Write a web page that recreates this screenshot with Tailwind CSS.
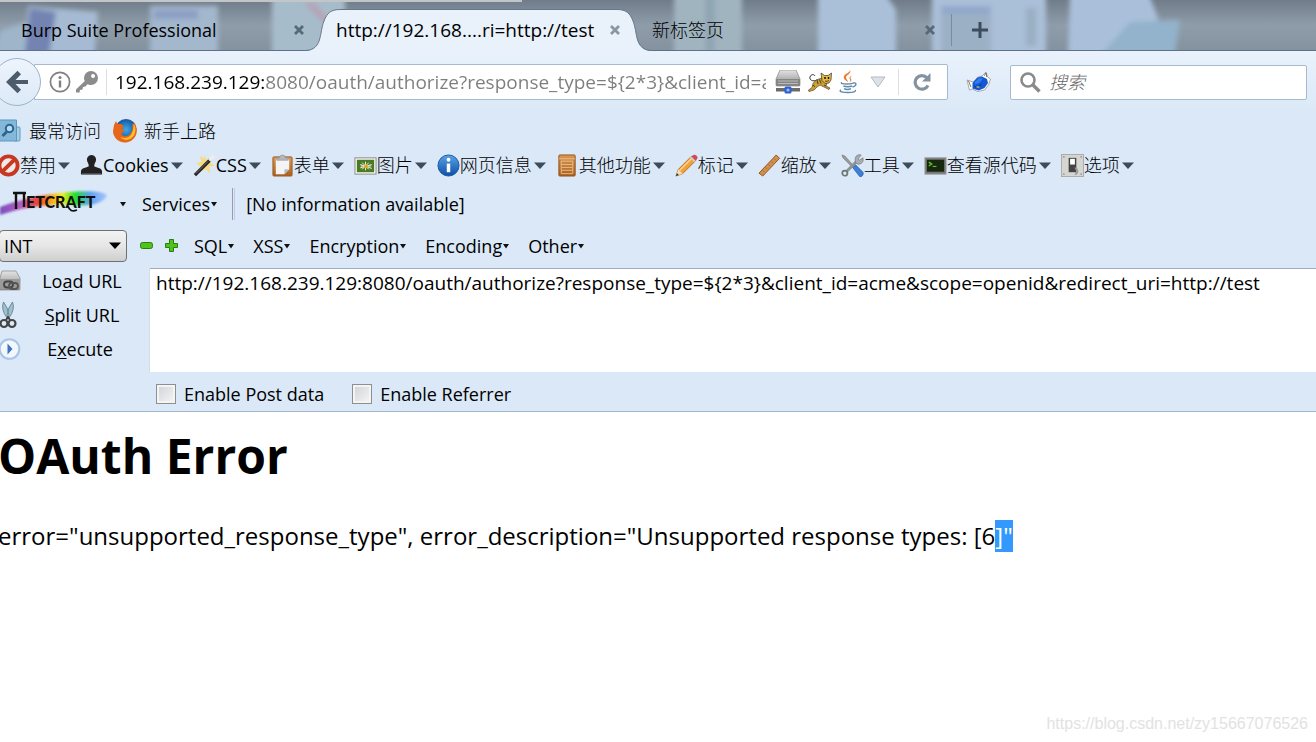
<!DOCTYPE html>
<html lang="zh-CN">
<head>
<meta charset="utf-8">
<title>OAuth Error</title>
<script src="https://cdn.jsdelivr.net/npm/@tailwindcss/browser@4"></script>
</head>
<body class="min-h-screen bg-white text-black text-lg leading-6 overflow-hidden relative font-['Open_Sans','Noto_Sans_CJK_SC',sans-serif]">

<svg class="absolute size-0" aria-hidden="true">
  <defs>
    <linearGradient id="gBlue" x1="0" y1="0" x2="0" y2="1"><stop offset="0" stop-color="#5ba3e6"/><stop offset="1" stop-color="#0b4fa8"/></linearGradient>
    <linearGradient id="gGrey" x1="0" y1="0" x2="0" y2="1"><stop offset="0" stop-color="#e4e4e4"/><stop offset="1" stop-color="#8a8a8a"/></linearGradient>
    <linearGradient id="gWood" x1="0" y1="0" x2="0" y2="1"><stop offset="0" stop-color="#d99a55"/><stop offset="1" stop-color="#a85f20"/></linearGradient>
    <linearGradient id="gRain" x1="0" y1="0" x2="1" y2="0"><stop offset="0" stop-color="#7a4fc0"/><stop offset=".2" stop-color="#b65fc0"/><stop offset=".36" stop-color="#f0402a"/><stop offset=".48" stop-color="#f7a81c"/><stop offset=".58" stop-color="#f4ee20"/><stop offset=".7" stop-color="#1fe02a"/><stop offset=".84" stop-color="#5fa0f0"/><stop offset="1" stop-color="#a9c8fb"/></linearGradient>
    <radialGradient id="gFox"><stop offset="0" stop-color="#3fa9e8"/><stop offset="1" stop-color="#14559f"/></radialGradient>
    <filter id="soft" x="-10%" y="-30%" width="120%" height="160%"><feGaussianBlur stdDeviation="2.500"/></filter>
    <filter id="soft1" x="-10%" y="-30%" width="120%" height="160%"><feGaussianBlur stdDeviation="1.200"/></filter>
    <symbol id="x" viewBox="0 0 12 12"><path d="M2 2l8 8M10 2l-8 8" stroke="currentColor" stroke-width="2.800" fill="none"/></symbol>
    <symbol id="down" viewBox="0 0 12 7"><path d="M0 .5h12L6 7z" fill="#3c4c5a"/></symbol>
    <symbol id="tiny" viewBox="0 0 8 6"><path d="M1 1h6L4 5.500z" fill="#111"/></symbol>
  </defs>
</svg>

<header class="bg-[#dae8f7] border-b border-[#a3b6c9]">

  <!-- Tab strip -->
  <div class="relative h-[51px] flex bg-[#8796a5] overflow-hidden" role="tablist">
    <svg class="absolute inset-0 w-full h-full" viewBox="0 0 1316 51" preserveAspectRatio="none" aria-hidden="true">
      <defs><linearGradient id="sky" x1="0" y1="0" x2="0" y2="1"><stop offset="0" stop-color="#707c89"/><stop offset=".5" stop-color="#8f9dab"/><stop offset="1" stop-color="#84929f"/></linearGradient></defs>
      <rect width="1316" height="51" fill="url(#sky)"/>
      <g filter="url(#soft)">
        <path d="M0 30L28 22 24 60H-10z" fill="#9fb5c9"/>
        <path d="M28 6L98 12 94 60H24z" fill="#a6bbd3"/>
        <path d="M30 8L56 12 48 60H24z" fill="#7383b2"/>
        <rect x="150" y="6" width="68" height="54" fill="#a3b7cd"/>
        <rect x="154" y="10" width="44" height="9" fill="#8c9fc4"/>
        <path d="M272-4H345V60H272z" fill="#a7bccb"/>
        <path d="M304 3l10-1 14 16-4 6z" fill="#b4a4b6"/>
        <rect x="674" y="-8" width="68" height="68" fill="#a0b4c0"/>
        <rect x="705" y="-8" width="10" height="68" fill="#90a5b2"/>
        <path d="M818-8H884L896 10V60H818z" fill="#aac0d9"/>
        <rect x="932" y="-8" width="114" height="68" fill="#aabfd8"/>
        <rect x="941" y="6" width="50" height="54" fill="#9bb0c4"/>
        <rect x="941" y="6" width="50" height="8" fill="#91a8cc"/>
        <rect x="1026" y="8" width="10" height="38" fill="#99afc2"/>
        <path d="M1070-8H1148L1158 18 1156 60H1068z" fill="#aac0da"/>
        <path d="M1130 22L1180 20 1174 60H1096z" fill="#93b2cb"/>
      </g>
      <rect width="522" height="2" fill="#c3c6c9"/>
      <rect y="50" width="1316" height="1" fill="#5e7188"/>
    </svg>
    <div class="relative w-[305px] pl-[21px] flex items-center pt-[10px] pb-[1px]" role="tab">
      <span class="flex-1">Burp Suite Professional</span>
      <button aria-label="关闭标签页" class="text-[#57687a]"><svg class="size-3"><use href="#x"/></svg></button>
    </div>
    <div class="relative w-[347px] px-[31px] flex items-center pt-[10px] pb-[1px]" role="tab" aria-selected="true">
      <div class="absolute inset-x-0 top-[9px] bottom-0 flex">
        <svg class="w-[35px] h-[42px]" viewBox="0 0 35 42"><path d="M0 42C18 41 14 24 19 12 22 4 26 .5 35 .5V42z" fill="#e9f1fb"/><path d="M0 41.500C18 41 14 24 19 12 22 4 26 .5 35 .5" fill="none" stroke="#66788c"/></svg>
        <div class="flex-1 bg-[#e9f1fb] border-t border-[#66788c]"></div>
        <svg class="w-[35px] h-[42px]" viewBox="0 0 35 42"><path d="M35 42C17 41 21 24 16 12 13 4 9 .5 0 .5V42z" fill="#e9f1fb"/><path d="M35 41.500C17 41 21 24 16 12 13 4 9 .5 0 .5" fill="none" stroke="#66788c"/></svg>
      </div>
      <span class="relative flex-1 text-[19px]">http://192.168....ri=http://test</span>
      <button aria-label="关闭标签页" class="relative text-[#8997a5]"><svg class="size-3"><use href="#x"/></svg></button>
    </div>
    <div class="relative w-[284px] flex items-center pt-[10px] pb-[1px] font-light" role="tab">
      <span class="flex-1">新标签页</span>
      <button aria-label="关闭标签页" class="text-[#57687a]"><svg class="size-3"><use href="#x"/></svg></button>
    </div>
    <div class="relative ml-[15px] mt-[14px] w-px h-8 bg-[#7a8b9c]"></div>
    <button aria-label="新建标签页" class="relative ml-5 pt-2"><svg class="size-4" viewBox="0 0 16 16"><path d="M8 0v16M0 8h16" stroke="#3b4c5d" stroke-width="3"/></svg></button>
  </div>

  <!-- Navigation bar -->
  <div class="h-16 flex items-center bg-linear-to-b from-[#e9f2fc] to-[#dae8f7] pr-[9px] pb-[2px] overflow-hidden">
    <button aria-label="后退" class="relative z-10 -ml-[7px] shrink-0 size-12 rounded-full border border-[#9fb3c8] bg-linear-to-b from-[#edf4fc] to-[#dce9f7] flex items-center justify-center">
      <svg class="w-[22px] h-6" viewBox="0 0 22 24"><path d="M22 10H9.500L15 4.200 11.500.8 0 12l11.500 11.200L15 19.800 9.500 14H22z" fill="#4d5c6a"/></svg>
    </button>
    <div class="-ml-[7px] flex-1 min-w-0 h-9 flex items-center bg-white border border-[#a7b9cc] rounded-r-xs pl-[14px]">
      <svg class="size-[22px] shrink-0" viewBox="0 0 22 22"><circle cx="11" cy="11" r="9.600" fill="none" stroke="#808080" stroke-width="1.700"/><path d="M11 9.500V16.500" stroke="#808080" stroke-width="2.400"/><circle cx="11" cy="6.500" r="1.500" fill="#808080"/></svg>
      <svg class="ml-[5px] size-[22px] shrink-0" viewBox="0 0 22 22"><path fill-rule="evenodd" d="M15 0a7 7 0 0 1 0 14c-1.500 0-2.500-.3-3.500-.8L9.500 15.500 7 16 6.500 18.500 4 19 3.500 21.500H0V18.500L8.800 10C8 8.500 8 7.800 8 7a7 7 0 0 1 7-7zM17 3a2 2 0 1 0 .1 4A2 2 0 0 0 17 3z" fill="#8c8c8c"/></svg>
      <span class="ml-2 w-px h-[26px] bg-[#dcdfe3]"></span>
      <input aria-label="地址" class="ml-2 flex-1 min-w-0 h-8 text-[19px] outline-none text-transparent bg-clip-text bg-[linear-gradient(90deg,#000_150px,#7d7d7d_150px)]" value="192.168.239.129:8080/oauth/authorize?response_type=${2*3}&amp;client_id=acme&amp;scope=openid">
      <svg class="ml-[9px] w-[26px] h-6 shrink-0" viewBox="0 0 26 24"><path d="M5 0h16l4 9v6q0 1-1 1H2q-1 0-1-1V9z" fill="url(#gGrey)" stroke="#777" stroke-width=".6"/><path d="M1 9h24v6q0 1-1 1H2q-1 0-1-1z" fill="#858585"/><path d="M3 11h20M3 13.500h20" stroke="#bbb" stroke-width="1"/><path d="M1 18h24v3.500H1z" fill="#6b6b6b"/><rect x="9.500" y="16.500" width="7" height="7" rx="1.500" fill="#2b62d4"/><circle cx="13" cy="20" r="1.600" fill="#9cc0ff"/></svg>
      <svg class="ml-[7px] w-[25px] h-5 shrink-0" viewBox="0 0 25 20"><path d="M9 8C5 10 1 8 2 5s4-3 5-1" fill="none" stroke="#333" stroke-width="1"/><path d="M8 8l6-2 5 5-1 3 4 2-1 1.500-5-2.500-4-2-3 2-3 3-5 1.500-1-1 4-3 1-4z" fill="#cfa02c" stroke="#333" stroke-width=".6"/><path d="M13 1l3.500 2.500h3.500L23.500 1 23 8l-2 3-4 .5-3-3z" fill="#e3b943" stroke="#333" stroke-width=".7"/><path d="M9 8l1 4M11.500 7.500l1.500 4M5 13l2 2M16 13l2 1" stroke="#333" stroke-width=".9"/><circle cx="17" cy="6" r=".9"/><circle cx="20.500" cy="6" r=".9"/><path d="M17 9q2 1 4-.5" fill="none" stroke="#702020" stroke-width=".9"/></svg>
      <svg class="ml-[6px] w-[19px] h-6 shrink-0" viewBox="0 0 19 24"><path d="M11 0c2 4-5 5-4 8 .4 1.500 2 2.500 2 4-3-2-5-3.500-4-6S11 3 11 0zM13.500 5c-3 1.500-3.500 3-2.500 4.500.8 1.200.2 2-.8 3 3.500-2 2-3 1.500-4S12 6.500 13.500 5z" fill="#ec7a2a"/><path d="M3 12.500c-2 1 1 1.500 5 1.500s6-.7 6-1.200M4.500 16c2 1 6.500 1 8.500 0M5 18.700c2 1 5 1 7 0M2 20c-3 1.500 2 2.500 7 2.500s9-1 7-2.500M14 13c4-1 4 3-.5 4" fill="none" stroke="#5b8cab" stroke-width="1.400"/></svg>
      <svg class="ml-3 w-4 h-3 shrink-0" viewBox="0 0 16 12"><path d="M1 1h14L8 11z" fill="#dde2e8" stroke="#b3bac2"/></svg>
      <span class="ml-3 w-px h-[26px] bg-[#dcdfe3]"></span>
      <button aria-label="重新载入" class="ml-[14px] mr-4 shrink-0"><svg class="size-[18px]" viewBox="0 0 18 18"><path d="M14 4.800A6.800 6.800 0 1 0 15 12.500" fill="none" stroke="#8492a1" stroke-width="3.200"/><path d="M17.500 0v8.500H9z" fill="#8492a1"/></svg></button>
    </div>
    <svg class="mx-[18px] w-[26px] h-[22px] shrink-0" viewBox="0 0 26 22"><path d="M1 9l6 2 5-5 4-1 4-4 1.500 5L24.500 8l-2 6-4 5-7 1.500-5-2.500-3 1z" fill="#fff" stroke="#888" stroke-width=".7"/><path d="M6.500 12l5-5.500L16 5.500l5 2.500 1 4-3.500 5-6 2.500-6-2z" fill="#1458d4"/><path d="M9 11l4-4 4 .5-3 4-5 2z" fill="#2f7cf2"/><path d="M8 15.500l4-.8 4-2.200-2.500 4-3 .8z" fill="#0b3a95"/><path d="M18 5l2-3 .8 4M2.500 10l2.500 6" stroke="#444" stroke-width=".7" fill="none"/><path d="M10.500 16h3" stroke="#ddd89a" stroke-width="1.200"/></svg>
    <label class="w-[297px] h-[35px] flex items-center bg-white border border-[#a7b9cc] rounded-xs pl-[9px]">
      <svg class="size-[21px] shrink-0" viewBox="0 0 21 21"><circle cx="8" cy="8" r="6.500" fill="none" stroke="#8a8a8a" stroke-width="2.600"/><path d="M12.500 12.500L19.500 19.500" stroke="#8a8a8a" stroke-width="3.400"/></svg>
      <input type="search" aria-label="搜索" placeholder="搜索" class="ml-2 flex-1 min-w-0 outline-none italic font-light placeholder:text-[#666]">
    </label>
  </div>

  <!-- Bookmarks -->
  <nav class="h-8 flex items-center font-light" aria-label="书签">
    <a href="#" class="flex items-center">
      <svg class="-ml-px w-[22px] h-6 mr-2" viewBox="0 0 22 24"><path d="M16 8h4q1 0 1 1V21q0 1-1 1h-4z" fill="#a5cde4" stroke="#5f9cc3"/><path d="M0 1h17.500V22H0z" fill="#84b8da" stroke="#5a98c2"/><circle cx="10.500" cy="9.500" r="3.700" fill="#b8dcf0" stroke="#2e648c" stroke-width="2"/><path d="M8 12.500L3.500 17" stroke="#2e648c" stroke-width="2.800"/></svg>最常访问</a>
    <a href="#" class="flex items-center ml-3">
      <svg class="size-6 mr-[7px]" viewBox="0 0 24 24"><circle cx="13" cy="10.500" r="10.500" fill="url(#gFox)"/><path d="M1 6l2-4 1.500 3L8 5l3 2.500-2.500 2 3 1.500c-1 3-3 2-3 4 1 3 6 3 8.500 0 2.500-3 3-6 2-10l2.500 1L21 3c3 5 3.500 9 2 13-2 5-7 7.500-11 7.500C5 23.500 0 18 0 12z" fill="#e8661a"/><path d="M20.500 4c3 5 2.500 11.500-2 15-4 3-9 2-11-1 4 2 8 1 10.500-2 2-3 3-7 2.500-12z" fill="#fbc22c"/></svg>新手上路</a>
  </nav>

  <!-- Web developer toolbar -->
  <div class="h-9 flex items-center gap-[10px] whitespace-nowrap" role="toolbar" aria-label="Web Developer">
    <button class="flex items-center -ml-[3px] font-light"><svg class="size-[23px]" viewBox="0 0 24 24"><circle cx="12" cy="12" r="9.500" fill="#eee9e6" stroke="#c8371f" stroke-width="4"/><path d="M18.500 5.500L5.500 18.500" stroke="#c8371f" stroke-width="4"/></svg>禁用<svg class="ml-[2px] w-3 h-[7px]"><use href="#down"/></svg></button>
    <button class="flex items-center"><svg class="size-[23px]" viewBox="0 0 24 24"><path d="M12 1a4.800 4.800 0 0 1 4.500 6.500C15.500 10 14.500 11 15 13l6 2q2 1 2 3v3.500H1V18q0-2 2-3l6-2c.5-2-.5-3-1.500-5.500A4.800 4.800 0 0 1 12 1z" fill="#222"/><path d="M2 20.500h20" stroke="#555"/></svg>Cookies<svg class="ml-[2px] w-3 h-[7px]"><use href="#down"/></svg></button>
    <button class="flex items-center"><svg class="size-[23px]" viewBox="0 0 24 24"><path d="M12 1l2 5 6-3-2 6 5 3-6 1 1 7-5-4-6 3 1-6-5-3 6-2-2-6 5 3z" fill="#fbd873" opacity=".9"/><path d="M2 22L18 6" stroke="#222" stroke-width="3.400"/><path d="M17 7l5-5" stroke="#eee" stroke-width="3.400"/><path d="M3 20.500L16 7.500" stroke="#888" stroke-width=".8"/></svg>CSS<svg class="ml-[2px] w-3 h-[7px]"><use href="#down"/></svg></button>
    <button class="flex items-center font-light"><svg class="size-[23px]" viewBox="0 0 24 24"><rect x="2" y="3" width="20" height="20" rx="1" fill="url(#gWood)" stroke="#a05a20"/><path d="M5 5h14v11l-5 5H5z" fill="#f4f4f6"/><path d="M19 16h-5v5z" fill="#bbb"/><path d="M6 6.500V4h3q0-3 3-3t3 3h3v2.500z" fill="#b5b8bb" stroke="#888" stroke-width=".6"/></svg>表单<svg class="ml-[2px] w-3 h-[7px]"><use href="#down"/></svg></button>
    <button class="flex items-center font-light"><svg class="size-[23px]" viewBox="0 0 24 24"><rect x="1" y="4" width="22" height="17" fill="#f5f5f0" stroke="#8b8b84"/><rect x="3" y="6" width="18" height="13" fill="#497a24"/><path d="M12 8v9M7 12.500h11M8.500 9l7 7M15.500 9l-7 7M6.500 14.500l12-3.500M6.500 11l12 4" stroke="#f2f2ec" stroke-width="1"/><circle cx="12.500" cy="13" r="2" fill="#e8a418"/></svg>图片<svg class="ml-[2px] w-3 h-[7px]"><use href="#down"/></svg></button>
    <button class="flex items-center font-light"><svg class="size-[23px]" viewBox="0 0 24 24"><circle cx="12" cy="12" r="11" fill="url(#gBlue)" stroke="#1a56a4"/><circle cx="12" cy="6" r="2" fill="#fff"/><path d="M12 10v9" stroke="#fff" stroke-width="3.600"/></svg>网页信息<svg class="ml-[2px] w-3 h-[7px]"><use href="#down"/></svg></button>
    <button class="flex items-center font-light"><svg class="size-[23px]" viewBox="0 0 24 24"><path d="M3 2q0-1 1-1h15q1 0 1 1v20q0 1-1 1H4q-1 0-1-1z" fill="url(#gWood)" stroke="#955218"/><path d="M3 5h17M5.500 7.500h12v13h-12zM6 11h11M6 14h11M6 17h11" fill="none" stroke="#f0c48c" stroke-width=".9"/></svg>其他功能<svg class="ml-[2px] w-3 h-[7px]"><use href="#down"/></svg></button>
    <button class="flex items-center font-light"><svg class="size-[23px]" viewBox="0 0 24 24"><path d="M1 23l2.500-7L17 2.500l4.500 4.500L8 20.500z" fill="#f1a13a" stroke="#a86018" stroke-width=".8"/><path d="M5 17L17.500 4.500" stroke="#fbd48e" stroke-width="1.600"/><path d="M17 2.500q3-3 5.500-.8t-1 5.300z" fill="#d2495a"/><path d="M15.500 4l4.500 4.500 1.500-1.500L17 2.500z" fill="#ccc"/><path d="M1 23l2.500-7 4.500 4.500z" fill="#f4dcb8"/><path d="M1 23l1-3 2 2z" fill="#222"/></svg>标记<svg class="ml-[2px] w-3 h-[7px]"><use href="#down"/></svg></button>
    <button class="flex items-center font-light"><svg class="size-[23px]" viewBox="0 0 24 24"><path d="M1 20L19 1l3.500 3.500L5 23z" fill="#d0904c" stroke="#925420"/><path d="M5 17l1.500 1.500M8 14l1.500 1.500M11 11l1.500 1.500M14 8l1.500 1.500M17 5l1.500 1.500" stroke="#8f5a22" stroke-width=".7"/></svg>缩放<svg class="ml-[2px] w-3 h-[7px]"><use href="#down"/></svg></button>
    <button class="flex items-center font-light"><svg class="size-[23px]" viewBox="0 0 24 24"><path d="M1 1l3 1 10 11-1.500 1.500L2 4z" fill="#999" stroke="#666" stroke-width=".5"/><path d="M12 14l3-3 8 8q1 2-1 4t-3 0z" fill="#3a7fd8" stroke="#1f55a0" stroke-width=".6"/><path d="M5.500 18.500L17 7" stroke="#8d9297" stroke-width="3"/><circle cx="4" cy="20" r="2.700" fill="none" stroke="#70757a" stroke-width="1.800"/><path d="M21 1l-3 4 1 1.500L23 4q1 4-2 6t-6-1q-1-5 1-7t5-1z" fill="#a9adb1" stroke="#70757a" stroke-width=".7"/></svg>工具<svg class="ml-[2px] w-3 h-[7px]"><use href="#down"/></svg></button>
    <button class="flex items-center font-light"><svg class="size-[23px]" viewBox="0 0 24 24"><rect x="1" y="4" width="22" height="17" fill="#777" stroke="#999"/><rect x="3" y="6" width="18" height="12.500" fill="#18280f"/><path d="M5 8.500l3 2-3 2" fill="none" stroke="#5fc030" stroke-width="1.500"/><path d="M9 13h4" stroke="#5fc030" stroke-width="1.200"/></svg>查看源代码<svg class="ml-[2px] w-3 h-[7px]"><use href="#down"/></svg></button>
    <button class="flex items-center font-light"><svg class="size-[23px]" viewBox="0 0 24 24"><rect x=".5" y=".5" width="23" height="23" fill="#d5d5d2" stroke="#aaa"/><rect x="8" y="4" width="8" height="15" fill="#444"/><rect x="9.500" y="5" width="5" height="6" fill="#fff"/><path d="M14 14q4 0 4 4t-4 4l2-4z" fill="#999"/><g fill="#888"><circle cx="3" cy="3" r=".8"/><circle cx="21" cy="3" r=".8"/><circle cx="3" cy="21" r=".8"/><circle cx="21" cy="21" r=".8"/></g></svg>选项<svg class="ml-[2px] w-3 h-[7px]"><use href="#down"/></svg></button>
  </div>

  <!-- Netcraft toolbar -->
  <div class="h-[42px] flex items-center whitespace-nowrap" role="toolbar" aria-label="Netcraft">
    <button class="flex items-center" aria-label="Netcraft">
      <svg class="w-[112px] h-[30px]" viewBox="0 0 112 30"><path d="M0 18C15 12 40 6 60 4 85 1 103 2 107 6 105 14 90 18 72 16 45 14 20 20 0 26z" fill="url(#gRain)" filter="url(#soft1)"/>
        <text x="26" y="19" font-size="16" font-family="Lato, sans-serif" font-weight="900" fill="#111">ETCRAFT</text>
        <path d="M13 4h13M16 5V20M24 5V18" stroke="#111" stroke-width="2.400" fill="none"/><path d="M68 17q2 7 9 4" stroke="#111" stroke-width="1.800" fill="none"/></svg>
      <svg class="ml-[7px] w-2 h-[6px]"><use href="#tiny"/></svg>
    </button>
    <button class="ml-[15px] flex items-center">Services<svg class="w-2 h-[6px]"><use href="#tiny"/></svg></button>
    <span class="ml-[14px] w-[3px] h-8 border-l border-r border-l-[#9a9aa8] border-r-[#c8c8f4]"></span>
    <span class="ml-[11px]">[No information available]</span>
  </div>

  <!-- HackBar -->
  <div class="h-[43px] flex items-center pb-[2px] whitespace-nowrap" role="toolbar" aria-label="HackBar">
    <div class="relative">
      <select aria-label="类型" class="block appearance-none -ml-px w-32 h-8 pl-1 border border-[#707070] rounded-sm bg-linear-to-b from-[#f3f3f3] via-[#e6e6e6] to-[#cfcfcf]"><option>INT</option></select>
      <svg class="absolute right-[6px] top-3 w-3 h-[7px] pointer-events-none" viewBox="0 0 12 7"><path d="M0 .5h12L6 7z"/></svg>
    </div>
    <button aria-label="减少" class="ml-[13px]"><svg class="w-[13px] h-[7px]" viewBox="0 0 13 7"><rect x=".5" y=".5" width="12" height="6" rx="2" fill="#4fc21c" stroke="#2b7d10"/></svg></button>
    <button aria-label="增加" class="ml-3"><svg class="size-[13px]" viewBox="0 0 13 13"><path d="M4.500.5h4v4h4v4h-4v4h-4v-4h-4v-4h4z" fill="#4fc21c" stroke="#2b7d10" stroke-linejoin="round"/></svg></button>
    <div class="ml-4 flex items-center gap-[18px]">
      <button class="flex items-center">SQL<svg class="w-2 h-[6px]"><use href="#tiny"/></svg></button>
      <button class="flex items-center">XSS<svg class="w-2 h-[6px]"><use href="#tiny"/></svg></button>
      <button class="flex items-center">Encryption<svg class="w-2 h-[6px]"><use href="#tiny"/></svg></button>
      <button class="flex items-center">Encoding<svg class="w-2 h-[6px]"><use href="#tiny"/></svg></button>
      <button class="flex items-center">Other<svg class="w-2 h-[6px]"><use href="#tiny"/></svg></button>
    </div>
  </div>
  <div class="flex">
    <div class="w-[149px] shrink-0 -mt-1">
      <button class="h-[34px] w-full flex items-center"><svg class="-ml-px size-[22px]" viewBox="0 0 22 22"><path d="M3 1h14l4 7v11q0 1-1 1H1V8z" fill="url(#gGrey)" stroke="#888" stroke-width=".7"/><path d="M1 9h20v10H1z" fill="#9a9a9a"/><rect x="5" y="11.500" width="9" height="6" rx="3" fill="none" stroke="#444" stroke-width="1.800"/><rect x="10" y="13" width="9" height="6" rx="3" fill="none" stroke="#555" stroke-width="1.800"/></svg><span class="w-[122px] text-center">Lo<u class="underline-offset-2">a</u>d URL</span></button>
      <button class="h-[34px] w-full flex items-center"><svg class="-ml-px w-[22px] h-7" viewBox="0 0 22 28"><path d="M4.500 1q-3 7 3.500 16l2-2Q9 6 4.500 1zM13.500 1q3 7-3.500 16l-2-2Q9 6 13.500 1z" fill="#9fbfce" stroke="#5b7d8c" stroke-width=".8"/><circle cx="5" cy="22.500" r="3.500" fill="none" stroke="#444" stroke-width="2.200"/><circle cx="13" cy="22.500" r="3.500" fill="none" stroke="#444" stroke-width="2.200"/><path d="M7 19l2-3 2 3" stroke="#444" stroke-width="2" fill="none"/></svg><span class="w-[122px] text-center"><u class="underline-offset-2">S</u>plit URL</span></button>
      <button class="h-[34px] w-full flex items-center"><svg class="-ml-px size-[22px]" viewBox="0 0 22 22"><circle cx="10.500" cy="11" r="9.800" fill="#f3f6fb" stroke="#a9c4ea" stroke-width="2"/><path d="M8.500 5.500l5 5.500-5 5.500z" fill="#3a74c4"/></svg><span class="w-[118px] text-center">E<u class="underline-offset-2">x</u>ecute</span></button>
    </div>
    <div class="flex-1 min-w-0">
      <textarea aria-label="URL" class="block w-full h-[104px] resize-none outline-none text-[19px] bg-white border-t border-l border-t-[#9fadb9] border-l-[#d3dde8] rounded-tl-xs pl-[6px] pt-[2px] overflow-hidden">http://192.168.239.129:8080/oauth/authorize?response_type=${2*3}&amp;client_id=acme&amp;scope=openid&amp;redirect_uri=http://test</textarea>
      <div class="h-[39px] flex items-center pt-1 pl-[7px] gap-7">
        <label class="flex items-center gap-2"><input type="checkbox" class="appearance-none size-5 border border-[#8e8f8f] bg-linear-to-br from-[#cfd2d8] to-[#f6f6f6] shadow-[inset_0_0_0_2px_#f4f4f4]">Enable Post data</label>
        <label class="flex items-center gap-2"><input type="checkbox" class="appearance-none size-5 border border-[#8e8f8f] bg-linear-to-br from-[#cfd2d8] to-[#f6f6f6] shadow-[inset_0_0_0_2px_#f4f4f4]">Enable Referrer</label>
      </div>
    </div>
  </div>
</header>

<main class="-ml-[2px]">
  <h1 class="pt-[9px] text-5xl leading-[70px] font-bold">OAuth Error</h1>
  <p class="pt-[29px] text-2xl leading-8 whitespace-nowrap">error="unsupported_response_type", error_description="Unsupported response types: [6<span class="inline-block bg-[#3399ff] text-white">]"</span></p>
</main>
<footer class="absolute right-2 bottom-[6px] text-base text-[#e2e2e2] font-['Liberation_Sans',sans-serif]">https://blog.csdn.net/zy15667076526</footer>
</body>
</html>
